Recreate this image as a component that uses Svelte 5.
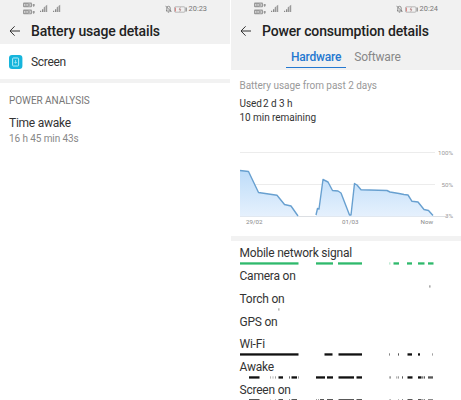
<script>
    const usage = [
        [[9, 25.5], [17.5, 26.5], [27.5, 47.5], [46, 50.3], [53.5, 59.5], [60, 61], [67, 71]],
        [[85, 70], [86.5, 63.5], [88, 64], [92, 34.5], [97, 37], [101.5, 45.5], [107, 46], [110, 48], [118.5, 70], [120, 70], [123.5, 38.5], [126, 40], [130, 44.7], [156, 45.5], [159, 47], [168, 48.5], [173, 49.5], [177, 50], [181, 56.3], [187, 57], [193, 64.5], [197.5, 65.5], [202, 70.5]]
    ];

    const line = (points) => points.map((p) => p.join(',')).join(' ');
    const area = (points) => `${points[0][0]},71.5 ${line(points)} ${points[points.length - 1][0]},71.5`;

    // each segment is [start, width, opacity]
    const rows = [
        { name: 'Mobile network signal', color: '#2fb96c', segments: [[0, 58.5], [76, 17], [98, 24], [149, 1.5, 0.3], [153.5, 5.5], [167, 5], [178, 6.5], [188, 5.5]] },
        { name: 'Camera on', color: '#111', segments: [[189.5, 0.8, 0.7]] },
        { name: 'Torch on', color: '#111', segments: [[38.5, 0.8, 0.6]] },
        { name: 'GPS on', color: '#111', segments: [] },
        { name: 'Wi-Fi', color: '#111', segments: [[0, 58.5], [84.5, 8], [98.5, 23.5], [149, 1, 0.5], [158, 1, 0.7], [167.5, 4.5], [178, 2], [192.2, 0.8, 0.5]] },
        { name: 'Awake', color: '#111', segments: [[9, 10.5], [30, 1, 0.3], [32.5, 1, 0.3], [35, 1, 0.4], [38.5, 4.5], [49, 1, 0.6], [51.5, 5.5], [58, 1, 0.4], [76, 9], [87, 6], [98.5, 15.5], [116.5, 5.5], [149.5, 1.2, 0.6], [156.5, 0.7, 0.6], [158.3, 0.7, 0.6], [162, 1, 0.7], [167.5, 5], [178, 3.5], [182.3, 1, 0.8], [184, 1, 0.7], [188, 5, 0.7]] },
        { name: 'Screen on', color: '#111', segments: [[9, 10.5], [30, 1, 0.3], [35, 1, 0.4], [38.5, 4.5], [49, 1, 0.6], [51.5, 5.5], [76, 1, 0.6], [78, 1, 0.6], [80, 4], [87, 6], [98.5, 15.5], [116.5, 5.5], [149.5, 1.2, 0.6], [158.3, 0.7, 0.6], [162, 1, 0.7], [167.5, 5], [178, 3.5], [182.3, 1, 0.8], [184, 1, 0.7], [188, 5, 0.7]] }
    ];
</script>

{#snippet statusBar(time)}
    <div class="status">
        <svg class="signals" width="40" height="14" viewBox="0 0 40 14">
            {#each [0, 7] as y}
                <rect x="0" y={y + 0.6} width="9" height="4.6" rx="1" fill="#999" />
                <path d="M1.5 {y + 4}V{y + 2}L3 {y + 3.5}L4.3 {y + 2}V{y + 4}M5.5 {y + 2}H7.5V{y + 4}H5.5" fill="none" stroke="#ddd" stroke-width=".7" />
                <path d="M9.5 {y + 3}h2.5M10.7 {y + 2}v2.8" stroke="#888" stroke-width=".9" />
            {/each}
            {#each [17, 30] as x}
                <path d="M{x} 10V8.7h1.2V10zM{x + 2} 10V7.2h1.3V10z" fill="#888" />
                <path d="M{x + 3.7} 10V5.5l1.3-1V10zM{x + 5.5} 10V4l1.7-1.2V10z" fill="#999" />
            {/each}
        </svg>
        <span class="right">
            <svg width="7" height="8" viewBox="0 0 7 8">
                <path d="M1.2 6h4.8L5.2 5V3a1.7 1.7 0 0 0-3.4 0v2zM2.8 7.2h1.4M.5.8l6 6.2" fill="none" stroke="#777" stroke-width=".8" />
            </svg>
            <svg width="13" height="7" viewBox="0 0 13 7">
                <rect x=".5" y=".8" width="10.5" height="5.4" rx="1" fill="none" stroke="#aaa" stroke-width=".8" />
                <path d="M1.5 1.5v4" stroke="#d88" stroke-width="1" />
                <path d="M6.3 1.5L5.3 3.5h1.4L5.8 5.5" fill="none" stroke="#a77" stroke-width=".8" />
                <path d="M12.2 1.5v4" stroke="#777" stroke-width="1" />
            </svg>
            <span class="time">{time}</span>
        </span>
    </div>
{/snippet}

{#snippet titleBar(title)}
    <div class="title">
        <svg width="12" height="12" viewBox="0 0 12 12">
            <path d="M11 6H1.2M5.6 1.3L1 6l4.6 4.7" fill="none" stroke="#333" stroke-width="1" />
        </svg>
        <h1>{title}</h1>
    </div>
{/snippet}

<main>
    <section class="phone usage">
        <header>
            {@render statusBar('20:23')}
            {@render titleBar('Battery usage details')}
        </header>
        <div class="app">
            <svg width="14" height="14" viewBox="0 0 14 14">
                <rect width="13.4" height="14" rx="3" fill="#16b5dc" />
                <rect x="3.6" y="3" width="6" height="8" rx=".8" fill="none" stroke="#c5f4fc" stroke-width=".9" />
                <path d="M6.6 5v3.2M5.4 7l1.2 1.3L7.8 7" fill="none" stroke="#c5f4fc" stroke-width=".7" />
            </svg>
            <span>Screen</span>
        </div>
        <div class="band"></div>
        <div class="analysis">
            <h2>POWER ANALYSIS</h2>
            <p class="label">Time awake</p>
            <p class="value">16 h 45 min 43s</p>
        </div>
    </section>

    <section class="phone power">
        <header>
            {@render statusBar('20:24')}
            {@render titleBar('Power consumption details')}
            <nav>
                <span class="tab active">Hardware</span>
                <span class="tab">Software</span>
            </nav>
        </header>
        <div class="summary">
            <p class="caption">Battery usage from past 2 days</p>
            <p class="used">Used<span>2 d 3 h</span></p>
            <p class="remaining">10 min remaining</p>
        </div>
        <svg class="chart" width="230" height="91" viewBox="0 0 230 91">
            <defs>
                <linearGradient id="fill" x1="0" y1="25" x2="0" y2="72" gradientUnits="userSpaceOnUse">
                    <stop offset="0" stop-color="#bddcf9" />
                    <stop offset="1" stop-color="#e6f1fd" />
                </linearGradient>
            </defs>
            <path d="M9 7.5h195M9 39.5h195" stroke="#ececec" />
            <path d="M9 71.5h207" stroke="#dcdfe3" />
            {#each usage as points}
                <polygon points={area(points)} fill="url(#fill)" />
                <polyline points={line(points)} fill="none" stroke="#68a0d0" stroke-width="1.4" stroke-linejoin="round" />
            {/each}
            <text x="222" y="10" text-anchor="end">100%</text>
            <text x="222" y="42" text-anchor="end">50%</text>
            <text x="222" y="72.5" text-anchor="end">3%</text>
            <text class="day" x="15" y="79">29/02</text>
            <text class="day" x="111" y="79">01/03</text>
            <text class="day" x="189.5" y="79">Now</text>
        </svg>
        <div class="band"></div>
        <div class="rows">
            {#each rows as row}
                <div class="row">
                    <span>{row.name}</span>
                    <svg width="220" height="3" viewBox="0 0 220 3">
                        {#each row.segments as [x, width, opacity = 1]}
                            <rect {x} y="0.3" {width} height="2.3" fill={row.color} {opacity} />
                        {/each}
                    </svg>
                </div>
            {/each}
        </div>
    </section>
</main>

<style>
    :global(body) {
        background: #fff;
    }
    main {
        display: flex;
        width: 461px;
        height: 400px;
        overflow: hidden;
        font-family: Roboto, "Noto Sans", sans-serif;
        color: #333;
    }
    .phone {
        width: 230px;
        flex: none;
    }
    .usage {
        margin-right: 1px;
    }
    header {
        background: #f1f1f1;
        height: 44px;
    }
    .power header {
        height: 70px;
    }
    .status {
        display: flex;
        justify-content: space-between;
        height: 18px;
        padding: 0 23px;
    }
    .signals {
        margin-top: 2px;
    }
    .right {
        display: flex;
        align-items: center;
        gap: 2px;
    }
    .time {
        font-size: 7.4px;
        line-height: 8px;
        color: #777;
    }
    .title {
        display: flex;
        align-items: center;
        height: 26px;
        padding-left: 9px;
    }
    h1 {
        margin: 0 0 0 10px;
        font-size: 14px;
        letter-spacing: -0.15px;
        font-weight: 500;
        color: #222;
        white-space: nowrap;
    }
    nav {
        display: flex;
        padding-left: 55px;
        height: 24px;
    }
    .tab {
        box-sizing: border-box;
        padding: 0 5px;
        margin-right: 3px;
        font-size: 12px;
        letter-spacing: -0.2px;
        line-height: 27px;
        color: #888;
    }
    .active {
        color: #2478d0;
        font-weight: 500;
        border-bottom: 1px solid #2478d0;
    }
    .app {
        display: flex;
        align-items: center;
        height: 35px;
        padding-left: 9px;
        font-size: 12px;
        letter-spacing: -0.3px;
    }
    .app span {
        margin-left: 8px;
    }
    .band {
        height: 5px;
        background: #f2f2f2;
    }
    .usage .band {
        height: 4px;
    }
    .analysis {
        padding: 10px 9px;
    }
    h2 {
        margin: 0;
        font-size: 10px;
        letter-spacing: -0.05px;
        font-weight: 400;
        line-height: 16px;
        color: #777;
    }
    p {
        margin: 0;
    }
    .label {
        margin-top: 6px;
        font-size: 12px;
        letter-spacing: -0.25px;
        line-height: 16px;
    }
    .value {
        font-size: 10px;
        letter-spacing: -0.1px;
        line-height: 15px;
        color: #888;
    }
    .summary {
        height: 75px;
        box-sizing: border-box;
        padding: 9px 8.5px 0;
    }
    .caption {
        font-size: 10px;
        letter-spacing: -0.03px;
        line-height: 14px;
        color: #999;
    }
    .used, .remaining {
        font-size: 10px;
        letter-spacing: -0.05px;
        line-height: 14px;
    }
    .used {
        margin-top: 4px;
    }
    .used span {
        margin-left: 1px;
    }
    .chart {
        display: block;
    }
    .chart text {
        font-size: 6.2px;
        fill: #999;
    }
    .chart .day {
        fill: #888;
    }
    .rows {
        padding: 4.4px 0 0 8.5px;
    }
    .row {
        height: 22.75px;
    }
    .row span {
        display: block;
        height: 17px;
        font-size: 12px;
        letter-spacing: -0.22px;
        line-height: 17.5px;
        white-space: nowrap;
    }
    .row svg {
        display: block;
    }
</style>
